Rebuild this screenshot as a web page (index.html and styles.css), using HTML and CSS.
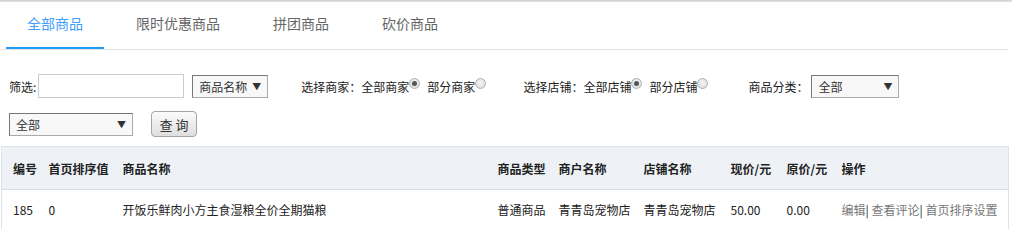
FILE: index.html
```html
<!DOCTYPE html>
<html lang="zh-CN">
<head>
<meta charset="utf-8">
<title>商品列表</title>
<link rel="stylesheet" href="styles.css">
</head>
<body>
<div class="topline"></div>
<div class="page">
  <div class="tabs">
    <a class="tab active">全部商品</a>
    <a class="tab">限时优惠商品</a>
    <a class="tab">拼团商品</a>
    <a class="tab">砍价商品</a>
  </div>

  <div class="filters">
    <div class="frow row1">
      <span class="lbl">筛选:</span>
      <span class="input"></span>
      <span class="select sel-name">商品名称<i class="arrow">▼</i></span>
      <span class="grp g1">选择商家：全部商家<i class="radio checked"></i><span class="opt">部分商家</span><i class="radio"></i></span>
      <span class="grp g2">选择店铺：全部店铺<i class="radio checked"></i><span class="opt">部分店铺</span><i class="radio"></i></span>
      <span class="grp g3">商品分类：</span>
      <span class="select sel-cat">全部<i class="arrow">▼</i></span>
    </div>
    <div class="frow row2">
      <span class="select sel-all">全部<i class="arrow">▼</i></span>
      <span class="btn">查 询</span>
    </div>
  </div>

  <table class="grid">
    <colgroup>
      <col class="c1"><col class="c2"><col class="c3"><col class="c4"><col class="c5">
      <col class="c6"><col class="c7"><col class="c8"><col class="c9">
    </colgroup>
    <thead>
      <tr>
        <th>编号</th><th>首页排序值</th><th>商品名称</th><th>商品类型</th><th>商户名称</th>
        <th>店铺名称</th><th>现价/元</th><th>原价/元</th><th>操作</th>
      </tr>
    </thead>
    <tbody>
      <tr>
        <td>185</td><td>0</td><td>开饭乐鲜肉小方主食湿粮全价全期猫粮</td><td>普通商品</td><td>青青岛宠物店</td>
        <td>青青岛宠物店</td><td>50.00</td><td>0.00</td>
        <td class="ops"><a>编辑</a>| <a>查看评论</a>| <a>首页排序设置</a></td>
      </tr>
    </tbody>
  </table>
</div>
</body>
</html>
```
FILE: styles.css
```css
html, body {
  margin: 0;
  padding: 0;
  background: #fff;
  font-family: "Noto Sans CJK SC", "Liberation Sans", sans-serif;
  font-size: 12px;
  color: #222;
}
.topline {
  height: 2px;
  background: linear-gradient(#cfcfcf, #e6e6e6);
}
.page {
  width: 1008px;
}
.tabs {
  display: flex;
  padding-left: 6px;
  border-bottom: 1px solid #e4e4e4;
}
.tab {
  display: block;
  height: 45px;
  line-height: 42px;
  padding: 0 21px 0 21px;
  margin-right: 11px;
  font-size: 14px;
  color: #666;
  border-bottom: 2px solid transparent;
}
.tab.active {
  color: #409eff;
  border-bottom-color: #1a9cf8;
}
.filters {
  padding: 24px 0 0 9px;
}
.frow {
  display: flex;
  align-items: center;
}
.row1 {
  height: 24px;
}
.row2 {
  margin-top: 13px;
  height: 26px;
}
.lbl {
  margin-right: 2px;
}
.input {
  width: 144px;
  height: 22px;
  border: 1px solid #ccc;
  background: #fff;
}
.select {
  position: relative;
  display: flex;
  align-items: center;
  box-sizing: border-box;
  height: 23px;
  border: 1px solid #aaa;
  border-top-color: #777;
  border-left-color: #777;
  background: #f8f8f8;
  padding-left: 6px;
  color: #333;
}
.arrow {
  position: absolute;
  right: 6px;
  top: 4px;
  font-style: normal;
  font-size: 9px;
  color: #333;
}
.sel-name {
  width: 76px;
  margin-left: 8px;
}
.sel-cat {
  width: 88px;
}
.sel-all {
  width: 124px;
}
.grp {
  display: flex;
  align-items: center;
}
.g1 { margin-left: 33px; }
.g2 { margin-left: 37px; }
.g3 { margin-left: 40px; margin-right: 3px; }
.opt { margin-left: 7px; }
.radio {
  display: inline-block;
  box-sizing: border-box;
  width: 11px;
  height: 11px;
  border-radius: 50%;
  border: 1px solid #b0b0b0;
  background: radial-gradient(circle at 50% 40%, #f4f4f4, #d8d8d8);
  margin-top: -5px;
  position: relative;
}
.radio.checked::after {
  content: "";
  position: absolute;
  left: 2px;
  top: 2px;
  width: 5px;
  height: 5px;
  border-radius: 50%;
  background: #555;
}
.btn {
  margin-left: 18px;
  box-sizing: border-box;
  width: 46px;
  height: 26px;
  border: 1px solid #a5a5a5;
  border-radius: 4px;
  background: linear-gradient(#fbfbfb, #dedede);
  display: flex;
  align-items: center;
  justify-content: center;
  font-size: 13px;
  color: #333;
}
.grid {
  margin-top: 9px;
  margin-left: 1px;
  width: 1007px;
  border-collapse: collapse;
  table-layout: fixed;
  border-left: 1px solid #dde3ea;
  border-right: 1px solid #dde3ea;
}
.c1 { width: 36px; }
.c2 { width: 74px; }
.c3 { width: 375px; }
.c4 { width: 61px; }
.c5 { width: 85px; }
.c6 { width: 87px; }
.c7 { width: 56px; }
.c8 { width: 55px; }
.c9 { width: 178px; }
.grid th,
.grid td {
  text-align: left;
  padding: 0 0 0 11px;
  white-space: nowrap;
  overflow: hidden;
}
.grid th {
  height: 42px;
  background: #eef2f6;
  border-top: 1px solid #dde3ea;
  border-bottom: 1px solid #d6dee7;
  font-weight: bold;
  color: #222;
}
.grid td {
  height: 39px;
  color: #222;
}
.ops {
  color: #333;
}
.ops a {
  color: #777;
}
```
